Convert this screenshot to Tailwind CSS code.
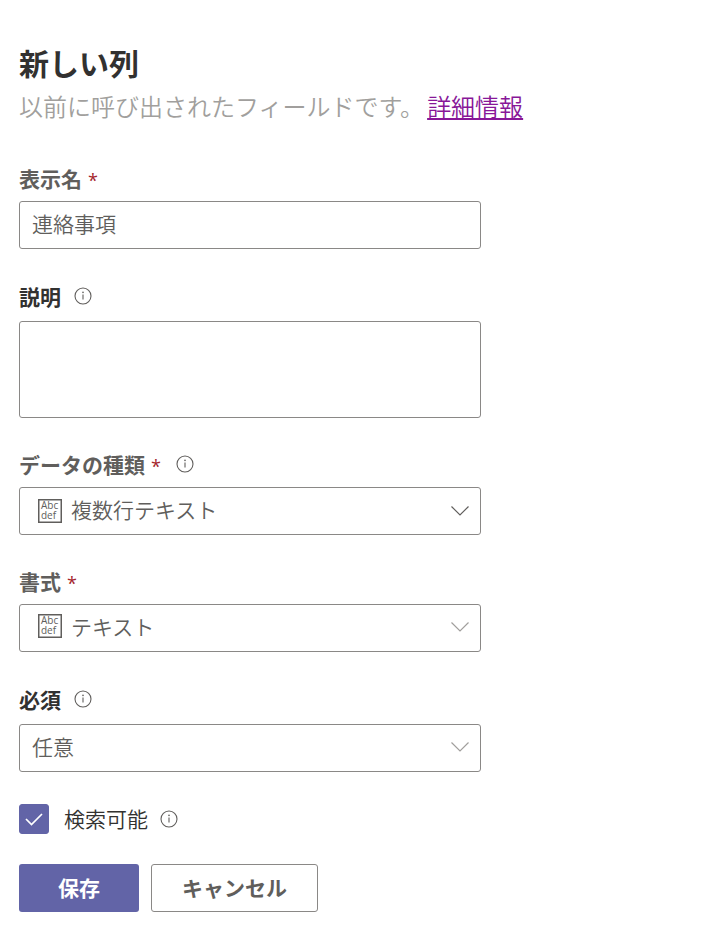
<!DOCTYPE html>
<html lang="ja">
<head>
    <meta charset="UTF-8">
    <meta name="viewport" content="width=device-width, initial-scale=1.0">
    <title>新しい列</title>
    <script src="https://cdn.jsdelivr.net/npm/@tailwindcss/browser@4"></script>
</head>
<body class="bg-white font-['Noto_Sans_CJK_JP',sans-serif] text-[21px] leading-8 text-[#605e5c]">
    <!-- Shared icons -->
    <svg class="hidden">
        <symbol id="info" viewBox="0 0 18 18">
            <circle cx="9" cy="9" r="8" fill="none" stroke="currentColor" stroke-width="1.1"/>
            <path d="M9 7.500v5" stroke="currentColor" stroke-width="1.1"/>
            <circle cx="9" cy="5.400" r=".8" fill="currentColor"/>
        </symbol>
        <symbol id="chevron" viewBox="0 0 18 10">
            <path d="M.5.5 9 9 17.500.5" fill="none" stroke="currentColor" stroke-width="1.2"/>
        </symbol>
        <symbol id="multiline" viewBox="0 0 24 24">
            <rect x=".75" y=".75" width="22.500" height="22.500" fill="none" stroke="currentColor" stroke-width="1.5"/>
            <text x="3" y="10" font-family="Open Sans, sans-serif" font-size="10" font-weight="500" fill="currentColor">Abc</text>
            <text x="3" y="20" font-family="Open Sans, sans-serif" font-size="10" font-weight="500" fill="currentColor">def</text>
        </symbol>
    </svg>

    <form class="px-[19px] pt-[42px] pb-5">
        <h1 class="text-[30px] leading-10 font-bold text-[#323130]">新しい列</h1>
        <p class="mt-1.5 text-2xl leading-9 font-[350] text-[#a19f9d]">以前に呼び出されたフィールドです。<a href="#" class="ml-[3px] text-[#881798] underline decoration-2 underline-offset-2">詳細情報</a></p>

        <div class="max-w-[462px]">
            <div class="mt-[38px]">
                <label for="name" class="block font-bold">表示名<span class="ml-1.5 text-lg font-normal font-['Open_Sans',sans-serif] text-[#a4262c]">*</span></label>
                <input id="name" type="text" value="連絡事項" class="mt-[7px] block h-12 w-full rounded-[3px] border border-[#8a8886] px-3 pb-1 font-[350]">
            </div>

            <div class="mt-[31px]">
                <div class="flex items-center gap-[13px]">
                    <label for="desc" class="font-bold text-[#323130]">説明</label>
                    <svg class="size-[18px]"><use href="#info"/></svg>
                </div>
                <textarea id="desc" class="mt-[9px] block h-[97px] w-full resize-none rounded-[3px] border border-[#8a8886] px-3 py-2 font-[350]"></textarea>
            </div>

            <div class="mt-[30px]">
                <div class="flex items-center gap-[15px]">
                    <label for="type" class="font-bold">データの種類<span class="ml-1.5 text-lg font-normal font-['Open_Sans',sans-serif] text-[#a4262c]">*</span></label>
                    <svg class="size-[18px]"><use href="#info"/></svg>
                </div>
                <div class="relative mt-[7px]">
                    <select id="type" class="block h-12 w-full appearance-none rounded-[3px] border border-[#8a8886] pr-10 pb-1 pl-[51px] font-[350]">
                        <option>複数行テキスト</option>
                    </select>
                    <svg class="pointer-events-none absolute top-3 left-[19px] size-6"><use href="#multiline"/></svg>
                    <svg class="pointer-events-none absolute top-[19px] right-3 h-2.5 w-[18px]"><use href="#chevron"/></svg>
                </div>
            </div>

            <div class="mt-[30px]">
                <label for="format" class="block font-bold">書式<span class="ml-1.5 text-lg font-normal font-['Open_Sans',sans-serif] text-[#a4262c]">*</span></label>
                <div class="relative mt-[7px]">
                    <select id="format" class="block h-12 w-full appearance-none rounded-[3px] border border-[#8a8886] pr-10 pb-1 pl-[51px] font-[350]">
                        <option>テキスト</option>
                    </select>
                    <svg class="pointer-events-none absolute top-2.5 left-[19px] size-6"><use href="#multiline"/></svg>
                    <svg class="pointer-events-none absolute top-[18px] right-3 h-2.5 w-[18px] text-[#a19f9d]"><use href="#chevron"/></svg>
                </div>
            </div>

            <div class="mt-[31px]">
                <div class="flex items-center gap-[13px]">
                    <label for="required" class="font-bold text-[#323130]">必須</label>
                    <svg class="size-[18px]"><use href="#info"/></svg>
                </div>
                <div class="relative mt-[9px]">
                    <select id="required" class="block h-12 w-full appearance-none rounded-[3px] border border-[#8a8886] pr-10 pb-1 pl-3 font-[350]">
                        <option>任意</option>
                    </select>
                    <svg class="pointer-events-none absolute top-[18px] right-3 h-2.5 w-[18px] text-[#a19f9d]"><use href="#chevron"/></svg>
                </div>
            </div>

            <div class="mt-[30px] flex items-center">
                <div class="grid place-items-center">
                    <input id="searchable" type="checkbox" checked class="peer col-start-1 row-start-1 size-[30px] appearance-none rounded-[3px] border border-[#6264a7] checked:bg-[#6264a7]">
                    <svg viewBox="0 0 18 14" class="pointer-events-none invisible col-start-1 row-start-1 h-3.5 w-[18px] text-white peer-checked:visible"><path d="M1 7l5.500 5.500L17 2" fill="none" stroke="currentColor" stroke-width="1.7"/></svg>
                </div>
                <label for="searchable" class="ml-[15px] pb-0.5 font-[350] text-[#323130]">検索可能</label>
                <svg class="ml-3 size-[18px]"><use href="#info"/></svg>
            </div>
        </div>

        <div class="mt-7 flex gap-3">
            <button type="submit" class="h-12 w-[120px] rounded-[3px] bg-[#6264a7] pb-0.5 font-bold text-white">保存</button>
            <button type="button" class="h-12 w-[167px] rounded-[3px] border border-[#8a8886] pb-0.5 font-bold">キャンセル</button>
        </div>
    </form>
</body>
</html>
